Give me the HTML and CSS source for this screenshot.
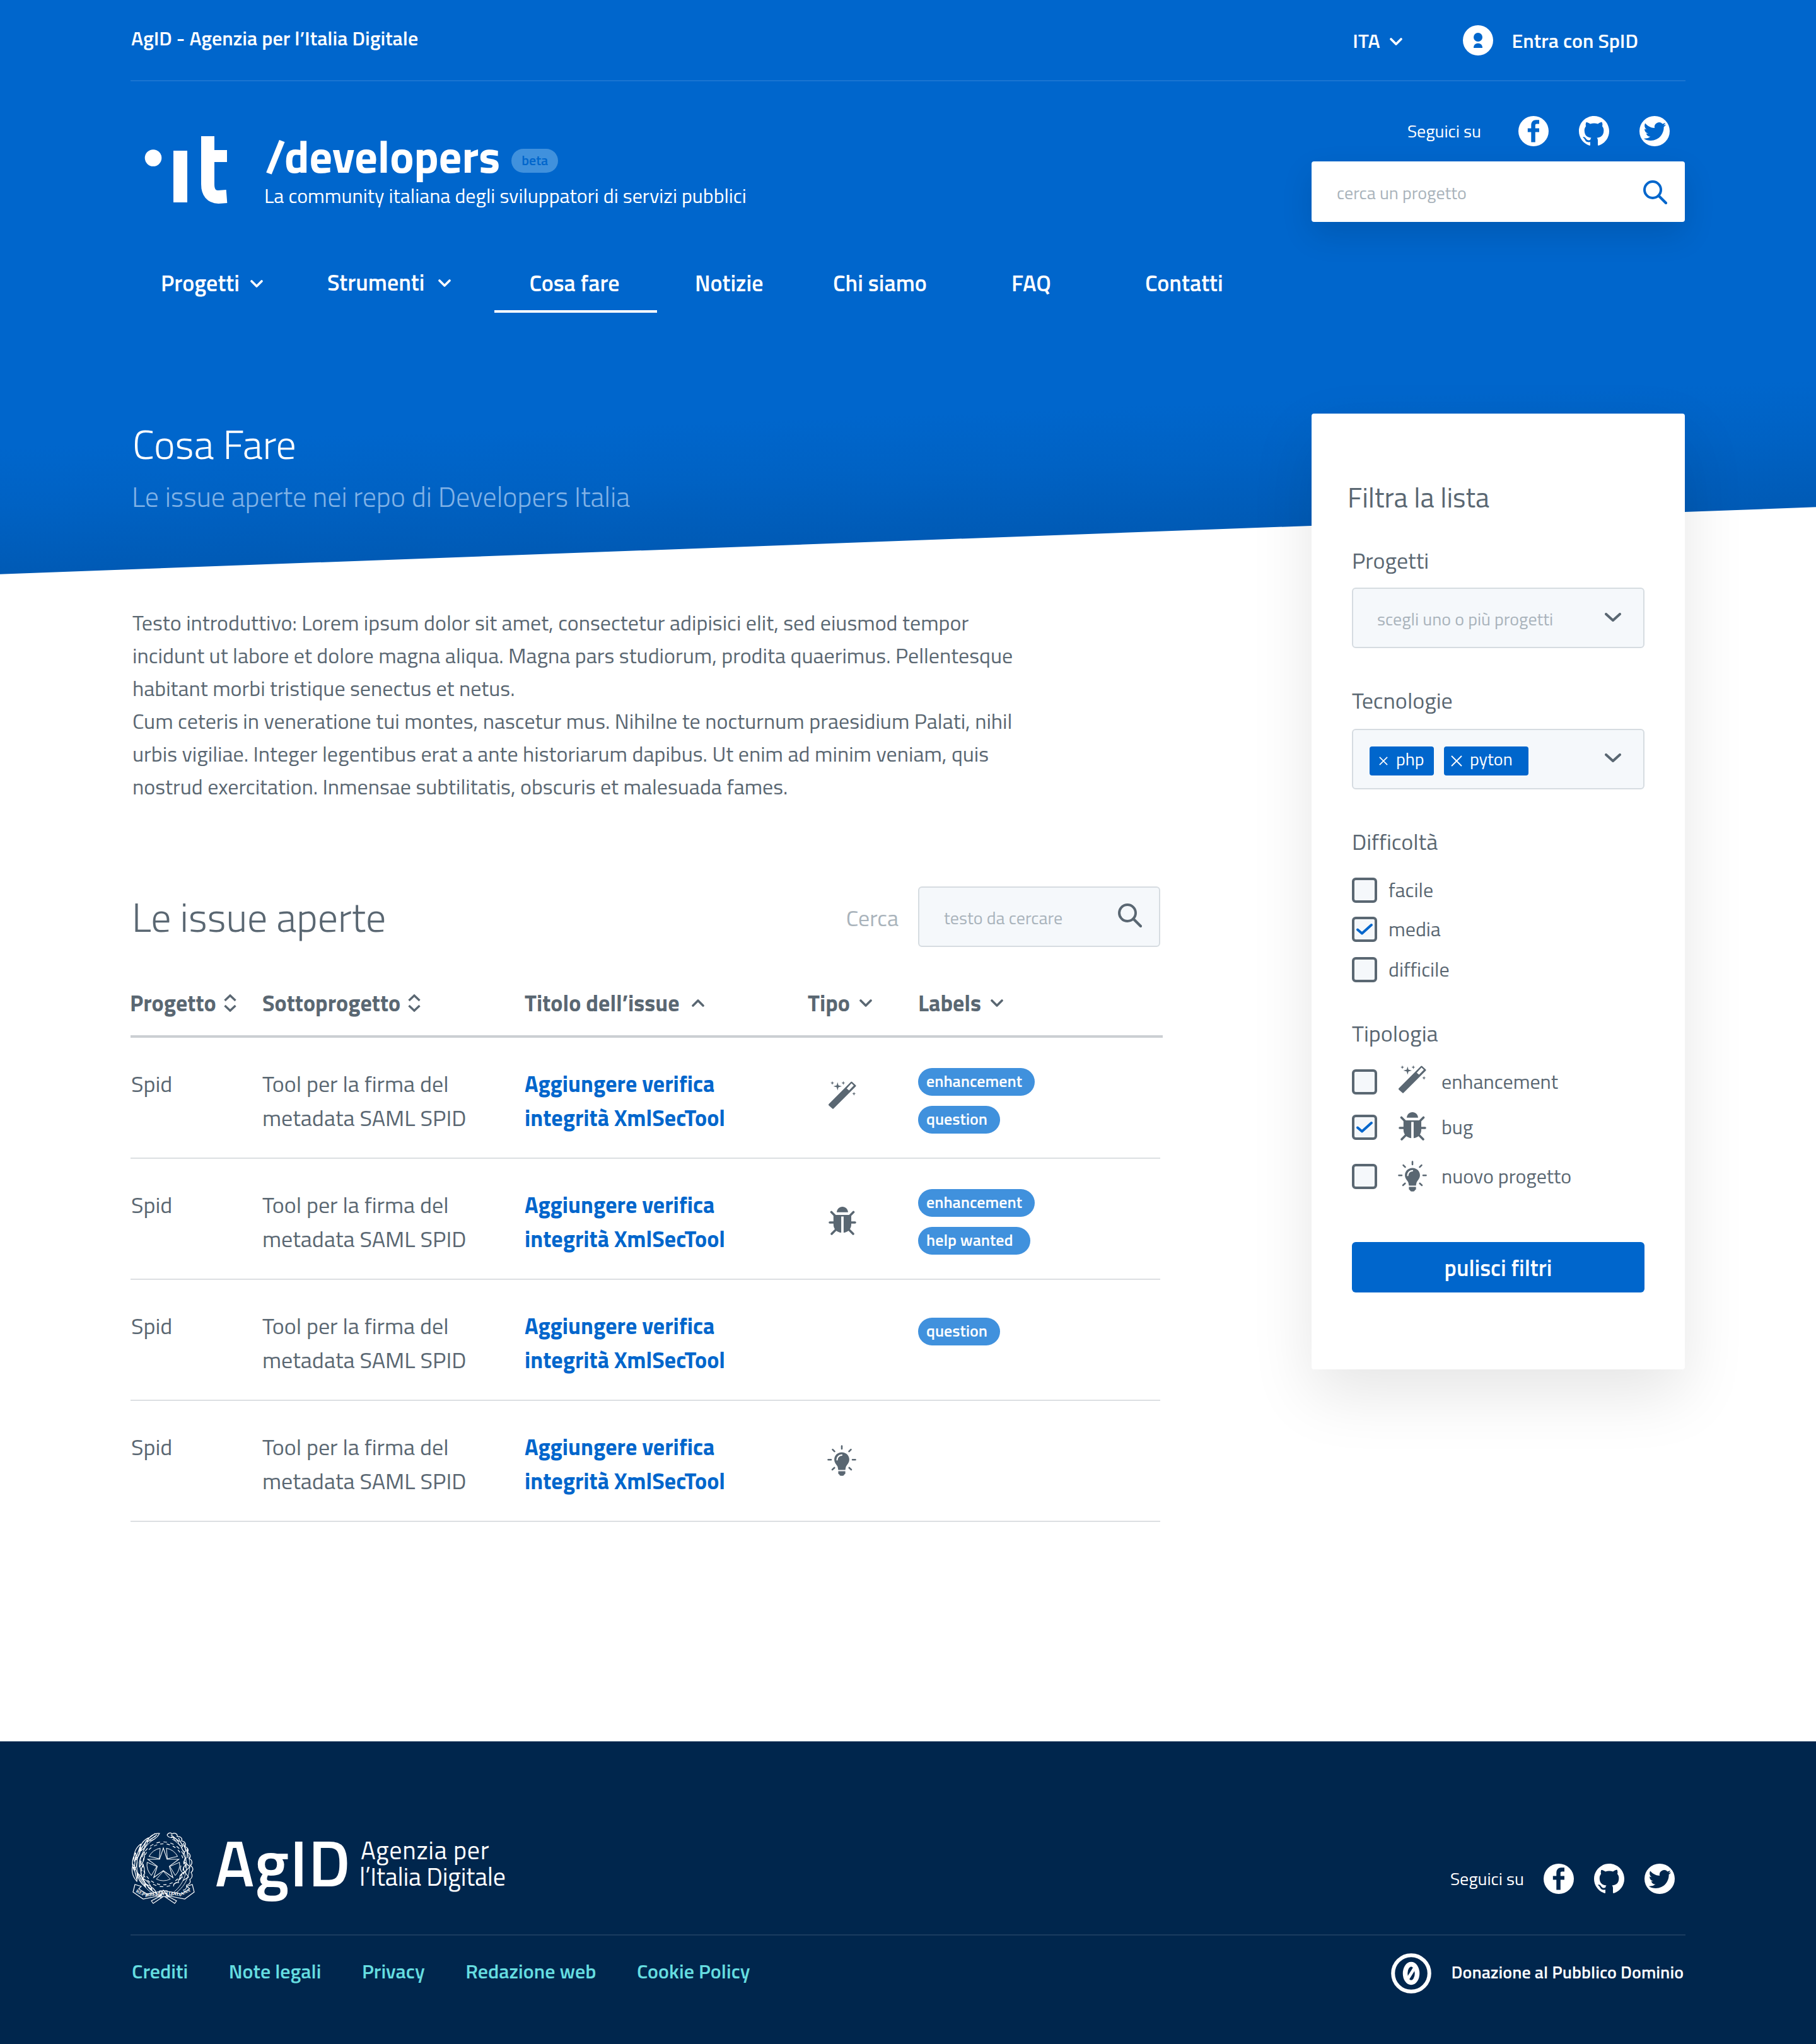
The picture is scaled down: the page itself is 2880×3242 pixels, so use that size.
FILE: index.html
```
<!DOCTYPE html>
<html lang="it">
<head>
<meta charset="utf-8">
<title>Developers Italia - Cosa fare</title>
<link rel="stylesheet" href="styles.css">
</head>
<body>
<svg class="sprite" aria-hidden="true">
  <symbol id="chevron" viewBox="0 0 20 12"><path d="M2 2l8 8 8-8" fill="none" stroke="currentColor" stroke-width="3.6" stroke-linecap="round" stroke-linejoin="round"/></symbol>
  <symbol id="chevron-lg" viewBox="0 0 26 14"><path d="M2 2l11 10L24 2" fill="none" stroke="currentColor" stroke-width="4" stroke-linecap="round" stroke-linejoin="round"/></symbol>
  <symbol id="sort" viewBox="0 0 20 28"><path d="M1.500 10L10 2l8.500 8M1.500 18l8.500 8 8.500-8" fill="none" stroke="currentColor" stroke-width="3.400"/></symbol>
  <symbol id="search" viewBox="0 0 38 38"><circle cx="15" cy="15" r="13" fill="none" stroke="currentColor" stroke-width="4"/><path d="M24.500 24.500L36 36" stroke="currentColor" stroke-width="4.200" stroke-linecap="round"/></symbol>
  <symbol id="facebook" viewBox="0 0 48 48"><circle cx="24" cy="24" r="24" fill="#fff"/><path fill="currentColor" d="M33 6.200v6.300h-3.600c-2 0-2.600.8-2.600 2.600v4.300H33v6h-6.200v16.100h-6.500V25.400h-5.500v-6h5.500v-5c0-5 3-8.200 7.600-8.200z"/></symbol>
  <symbol id="github" viewBox="0 0 16 16"><path fill="#fff" d="M8 0C3.580 0 0 3.580 0 8c0 3.540 2.290 6.530 5.470 7.590.4.070.550-.170.550-.380 0-.190-.010-.820-.010-1.490-2.010.370-2.530-.490-2.690-.940-.090-.230-.480-.940-.820-1.130-.280-.150-.680-.520-.010-.530.630-.010 1.080.580 1.230.820.720 1.210 1.870.870 2.330.660.070-.520.280-.870.510-1.070-1.780-.2-3.640-.890-3.640-3.950 0-.870.310-1.590.820-2.150-.080-.2-.360-1.020.080-2.120 0 0 .670-.210 2.200.820.640-.180 1.320-.270 2-.270s1.360.090 2 .270c1.530-1.040 2.200-.820 2.200-.820.440 1.100.160 1.920.080 2.120.510.560.820 1.270.820 2.150 0 3.070-1.870 3.750-3.650 3.950.290.250.540.730.540 1.480 0 1.070-.010 1.930-.010 2.200 0 .210.150.460.550.380A8.010 8.010 0 0 0 16 8c0-4.420-3.580-8-8-8z"/></symbol>
  <symbol id="twitter" viewBox="0 0 48 48"><circle cx="24" cy="24" r="24" fill="#fff"/><path fill="currentColor" transform="translate(6.700 6.800) scale(1.480)" d="M23.953 4.570a10 10 0 01-2.825.775 4.958 4.958 0 002.163-2.723c-.951.555-2.005.959-3.127 1.184a4.920 4.920 0 00-8.384 4.482C7.690 8.095 4.067 6.130 1.640 3.162a4.822 4.822 0 00-.666 2.475c0 1.710.870 3.213 2.188 4.096a4.904 4.904 0 01-2.228-.616v.06a4.923 4.923 0 003.946 4.827 4.996 4.996 0 01-2.212.085 4.936 4.936 0 004.604 3.417 9.867 9.867 0 01-6.102 2.105c-.390 0-.779-.023-1.170-.067a13.995 13.995 0 007.557 2.209c9.053 0 13.998-7.496 13.998-13.985 0-.210 0-.420-.015-.630A9.935 9.935 0 0024 4.590z"/></symbol>
  <symbol id="wand" viewBox="0 0 44 44"><path fill="currentColor" fill-rule="evenodd" d="M0 37.500v-1L35.400.900q1-1 2 0l5.700 5.300q1 1 0 2L8 43.200q-1 1-2 0L.500 38.500zM28.800 11.400l3.700 3.200 7.500-7.800-3.600-3.500z"/><path fill="currentColor" d="M14.300 1.500l1.400 4.900 5.300 1.600-5.300 1.600-1.400 4.900-1.400-4.900L7.600 8l5.300-1.600zM6-.3l.8 2.200 2.200.8-2.200.8L6 5.700l-.8-2.200L3 2.700l2.200-.8zM23.400-.3l.8 2.200 2.200.8-2.200.8-.8 2.200-.8-2.200-2.200-.8 2.200-.8zM40.300 16.800l.8 2.200 2.200.8-2.200.8-.8 2.200-.8-2.200-2.200-.8 2.200-.8z"/></symbol>
  <symbol id="bug" viewBox="0 0 44 45"><path fill="currentColor" d="M13 8.800C13.400 3.600 17 0 22 0s8.600 3.600 9 8.800zM7.800 13H36v15c0 7.500-5 12.400-12.100 13.200V15.600h-3.800v25.600C13 40.400 7.800 35.500 7.800 28z"/><path fill="none" stroke="currentColor" stroke-width="3.600" stroke-linecap="round" d="M4.500 8.500l5.500 5.500M2 25h7M5 43l6-6M39.500 8.500L34 14M42 25h-7M39 43l-6-6"/></symbol>
  <symbol id="bulb" viewBox="0 0 46 50"><path fill="currentColor" d="M23 11.400c6.800 0 11.900 5 11.900 11.300 0 4.800-2.500 7.300-4.600 10.300-1 1.500-1.300 4.500-1.700 6.500H17.400c-.4-2-.700-5-1.700-6.500-2.100-3-4.600-5.500-4.600-10.300 0-6.300 5.100-11.300 11.900-11.300zM17.400 41.500h11.200v3.500q0 1.200-1.500 1.500-.8 2.200-2.500 2.200h-3.200q-1.700 0-2.500-2.200-1.500-.3-1.500-1.500z"/><path fill="none" stroke="#fff" stroke-width="2.200" stroke-linecap="round" d="M15.500 23.500c0-4 3-7.500 7.500-7.700"/><path fill="none" stroke="currentColor" stroke-width="2.600" stroke-linecap="round" d="M23 1.500v4.500M1.500 23.200h4.500M40 23.200h4.500M8.500 7.200l3 3M37.500 7.200l-3 3M8 39l3.300-3M38 39l-3.300-3"/></symbol>
</svg>

<header class="hero">
  <div class="topbar">
    <span class="owner">AgID - Agenzia per l’Italia Digitale</span>
    <div class="topbar-tools">
      <span class="lang">ITA</span><svg class="chev lang-chev"><use href="#chevron"/></svg>
      <svg class="avatar" viewBox="0 0 48 48"><circle cx="24" cy="24" r="24" fill="#fff"/><circle cx="24" cy="19" r="7" fill="#06c"/><path d="M17 36c0-5 3-7.300 7-7.300s7 2.300 7 7.300z" fill="#06c"/></svg>
      <span class="login">Entra con SpID</span>
    </div>
  </div>

  <div class="masthead">
    <svg class="it-logo" viewBox="0 0 131 107"><circle cx="13" cy="34.500" r="13.300" fill="#fff"/><rect x="45" y="23" width="22" height="82" fill="#fff"/><rect x="90" y="22" width="40" height="19" fill="#fff"/><path d="M99.500 0v76q0 20 17 20.500l13-1" fill="none" stroke="#fff" stroke-width="21"/></svg>
    <div class="brand">
      <div class="brand-line"><span class="brand-name">/developers</span><span class="beta">beta</span></div>
      <div class="tagline">La community italiana degli sviluppatori di servizi pubblici</div>
    </div>
    <div class="masthead-side">
      <div class="social">
        <span class="follow">Seguici su</span>
        <svg><use href="#facebook"/></svg><svg><use href="#github"/></svg><svg><use href="#twitter"/></svg>
      </div>
      <div class="project-search"><span class="hint">cerca un progetto</span><svg><use href="#search"/></svg></div>
    </div>
  </div>

  <nav class="nav">
    <a>Progetti<svg class="chev"><use href="#chevron"/></svg></a>
    <a class="raised">Strumenti<svg class="chev"><use href="#chevron"/></svg></a>
    <a class="active">Cosa fare</a>
    <a>Notizie</a>
    <a>Chi siamo</a>
    <a>FAQ</a>
    <a>Contatti</a>
  </nav>

  <h1>Cosa Fare</h1>
  <p class="subtitle">Le issue aperte nei repo di Developers Italia</p>
</header>

<main class="main">
  <section class="content">
    <p class="intro">Testo introduttivo: Lorem ipsum dolor sit amet, consectetur adipisici elit, sed eiusmod tempor<br>incidunt ut labore et dolore magna aliqua. Magna pars studiorum, prodita quaerimus. Pellentesque<br>habitant morbi tristique senectus et netus.<br>Cum ceteris in veneratione tui montes, nascetur mus. Nihilne te nocturnum praesidium Palati, nihil<br>urbis vigiliae. Integer legentibus erat a ante historiarum dapibus. Ut enim ad minim veniam, quis<br>nostrud exercitation. Inmensae subtilitatis, obscuris et malesuada fames.</p>

    <div class="list-head">
      <h2>Le issue aperte</h2>
      <span class="search-label">Cerca</span>
      <div class="field list-search"><span class="hint">testo da cercare</span><svg><use href="#search"/></svg></div>
    </div>

    <div class="row thead">
      <div>Progetto<svg class="sort"><use href="#sort"/></svg></div>
      <div>Sottoprogetto<svg class="sort"><use href="#sort"/></svg></div>
      <div>Titolo dell’issue<svg class="chev up"><use href="#chevron"/></svg></div>
      <div>Tipo<svg class="chev"><use href="#chevron"/></svg></div>
      <div>Labels<svg class="chev"><use href="#chevron"/></svg></div>
    </div>

    <div class="row">
      <div>Spid</div>
      <div>Tool per la firma del<br>metadata SAML SPID</div>
      <div class="issue">Aggiungere verifica<br>integrità XmlSecTool</div>
      <div class="type"><svg class="i-wand"><use href="#wand"/></svg></div>
      <div class="labels"><span class="tag">enhancement</span><span class="tag">question</span></div>
    </div>
    <div class="row">
      <div>Spid</div>
      <div>Tool per la firma del<br>metadata SAML SPID</div>
      <div class="issue">Aggiungere verifica<br>integrità XmlSecTool</div>
      <div class="type"><svg class="i-bug"><use href="#bug"/></svg></div>
      <div class="labels"><span class="tag">enhancement</span><span class="tag wide">help wanted</span></div>
    </div>
    <div class="row">
      <div>Spid</div>
      <div>Tool per la firma del<br>metadata SAML SPID</div>
      <div class="issue">Aggiungere verifica<br>integrità XmlSecTool</div>
      <div class="type"></div>
      <div class="labels single"><span class="tag">question</span></div>
    </div>
    <div class="row">
      <div>Spid</div>
      <div>Tool per la firma del<br>metadata SAML SPID</div>
      <div class="issue">Aggiungere verifica<br>integrità XmlSecTool</div>
      <div class="type"><svg class="i-bulb"><use href="#bulb"/></svg></div>
      <div class="labels"></div>
    </div>
  </section>

  <aside class="panel">
    <h3>Filtra la lista</h3>
    <h4 class="first">Progetti</h4>
    <div class="field select"><span class="hint">scegli uno o più progetti</span><svg class="arrow"><use href="#chevron-lg"/></svg></div>
    <h4 class="second">Tecnologie</h4>
    <div class="field select tags">
      <span class="chip"><svg viewBox="0 0 16 16"><path d="M1 1l14 14M15 1L1 15" stroke="#fff" stroke-width="1.900"/></svg>php</span>
      <span class="chip long"><svg viewBox="0 0 16 16"><path d="M0 0l16 16M16 0L0 16" stroke="#fff" stroke-width="1.800"/></svg>pyton</span>
      <svg class="arrow"><use href="#chevron-lg"/></svg>
    </div>
    <h4 class="third">Difficoltà</h4>
    <div class="check c1"><i></i><span>facile</span></div>
    <div class="check c2"><i><svg viewBox="0 0 26 20"><path d="M2 10.500l7 6L24 3" fill="none" stroke="#06c" stroke-width="4" stroke-linecap="round" stroke-linejoin="round"/></svg></i><span>media</span></div>
    <div class="check c3"><i></i><span>difficile</span></div>
    <h4 class="fourth">Tipologia</h4>
    <div class="check c1"><i></i><b><svg class="i-wand"><use href="#wand"/></svg></b><span>enhancement</span></div>
    <div class="check c4"><i><svg viewBox="0 0 26 20"><path d="M2 10.500l7 6L24 3" fill="none" stroke="#06c" stroke-width="4" stroke-linecap="round" stroke-linejoin="round"/></svg></i><b><svg class="i-bug"><use href="#bug"/></svg></b><span>bug</span></div>
    <div class="check c5"><i></i><b><svg class="i-bulb"><use href="#bulb"/></svg></b><span>nuovo progetto</span></div>
    <button class="clear">pulisci filtri</button>
  </aside>
</main>

<footer class="footer">
  <div class="footer-top">
    <svg class="emblem" viewBox="0 0 102 113" fill="none" stroke="#fff" stroke-width=".9">
      <g transform="translate(50 50)">
        <circle r="35.500" stroke-width="1.200" stroke-dasharray="5.600 5.550"/>
        <circle r="32.500" stroke-width="1.200" stroke-dasharray="5.100 5.110" stroke-dashoffset="5.100"/>
        <path d="M0-26L5.900-8.100 24.700-8 9.500 3.100 15.300 21 0 10-15.300 21-9.500 3.100-24.700-8-5.900-8.100z" stroke-width="1.100"/>
        <path d="M0-11L-11-23.500A26 26 0 0 1 11-23.500Z" transform="rotate(180)"/><path d="M0-11L-11-23.500A26 26 0 0 1 11-23.500Z" transform="rotate(36)"/><path d="M0-11L-11-23.500A26 26 0 0 1 11-23.500Z" transform="rotate(108)"/><path d="M0-11L-11-23.500A26 26 0 0 1 11-23.500Z" transform="rotate(252)"/><path d="M0-11L-11-23.500A26 26 0 0 1 11-23.500Z" transform="rotate(324)"/>
      </g>
      <path d="M47 103C22 94 8 74 8 50 9 28 20 12 38 6M44 100C26 90 13 72 13 50 14 32 22 18 36 10"/>
      <path stroke-width="1.200" d="M44 1C36 0 28 5 24 14c8-1 16-5 20-13zM40 3l-12 9M37 1l-12 9M26 8c-8 4-13 12-14 22 8-4 14-12 14-22zM24 11L14 28M14 18C6 24 2 34 4 45c7-6 11-16 10-27zM13 22L6 42M6 32c-5 8-7 18-2 28 5-8 6-18 2-28zM6 36L4 57M2 50c-3 9-1 19 6 27 2-9 0-19-6-27zM3 54l5 20M20 30c-6 6-9 14-8 24 7-6 9-14 8-24zM22 14l-3 14M18 50c-4 8-5 16-1 24 4-7 4-16 1-24zM9 64c0 9 5 16 13 22-1-9-5-17-13-22zM11 67l10 17M17 72c2 7 7 13 15 18-2-8-7-14-15-18zM24 82c2 6 8 11 15 14-2-6-8-11-15-14z"/>
      <path d="M55 103C80 94 92 74 92 50 91 28 80 12 62 6M58 100C76 90 87 72 87 50 86 32 78 18 64 10"/>
      <path stroke-width="1.200" d="M56 4c1-4 6-5 8-2 4-3 9 0 8 4 5-1 9 3 7 7 5 0 8 5 5 9 5 1 7 6 4 9 5 2 6 7 3 10 5 2 6 7 2 11 5 3 5 8 1 11 3 4 2 9-2 11 2 4 0 8-5 9 1 4-2 8-6 8M56 4c3 4 7 4 10 3 0 4 4 7 8 6-1 4 2 8 6 8-2 4 1 8 4 9-3 3-2 8 2 10-4 3-4 8 0 11-5 2-5 7-2 11-5 1-6 5-4 9-5 0-7 4-6 8-4-1-8 2-8 6M62 3l12 10M74 8l7 14M82 16l4 14M88 24l0 16M78 52c-2 6 0 10 4 12-5 1-7 6-5 10M84 46l8 8-8 8 6 8-9 6"/>
      <path d="M5 82l-3 12 16 11 26-5 7-5 7 5 26 5 15-11-3-12-9 3 5 4-13 8-22-4-6-1-6 1-21 4-13-8 4-4zM44 100l6-9 8 9M48 99l-17 9 3 4 16-11M54 99l17 9-3 4-16-11M44 92h12v9H44z" stroke-width="1.200"/>
      <text x="6" y="94" transform="rotate(26 6 94)" class="motto">REPV</text><text x="23" y="101" transform="rotate(-5 23 101)" class="motto">BBLICA</text><text x="58" y="98" transform="rotate(6 58 98)" class="motto">ITAL</text><text x="76" y="101" transform="rotate(-26 76 101)" class="motto">IANA</text>
    </svg>
    <span class="agid">AgID</span>
    <div class="agid-name"><span class="agid-first">Agenzia per</span><br><span class="agid-second">l’Italia Digitale</span></div>
    <div class="social">
      <span class="follow">Seguici su</span>
      <svg><use href="#facebook"/></svg><svg><use href="#github"/></svg><svg><use href="#twitter"/></svg>
    </div>
  </div>
  <div class="footer-bottom">
    <a>Crediti</a><a>Note legali</a><a>Privacy</a><a>Redazione web</a><a>Cookie Policy</a>
    <svg class="cc0" viewBox="0 0 64 64" fill="none" stroke="#fff"><circle cx="32" cy="32" r="28.800" stroke-width="6"/><ellipse cx="32" cy="32" rx="9.500" ry="14.500" stroke-width="7.500"/><path d="M27 40l10-16" stroke-width="5"/></svg>
    <span class="license">Donazione al Pubblico Dominio</span>
  </div>
</footer>
</body>
</html>
```
FILE: styles.css
```
* { box-sizing: border-box; }
body {
  margin: 0;
  width: 2880px;
  background: #fff;
  color: #5a6772;
  font-family: "Titillium Web", Roboto, "Open Sans", sans-serif;
  font-weight: 400;
}
h1, h2, h3, h4, p { margin: 0; font-weight: 300; }
svg { display: block; flex: none; overflow: visible; }
.sprite { position: absolute; width: 0; height: 0; }
.chev { width: 20px; height: 12px; }
.sort { width: 20px; height: 28px; margin-left: 12px; }
.hint { font-size: 28px; line-height: 40px; color: #a9b3bb; font-weight: 400; }
.i-wand { width: 44px; height: 44px; }
.i-bug { width: 44px; height: 45px; }
.i-bulb { width: 46px; height: 50px; }

/* Header */
.hero {
  height: 911px;
  padding: 0 207px;
  color: #fff;
  background: linear-gradient(177.880deg, #06c 0, #06c 710px, #0062c4 800px, #005ab5 911px);
  clip-path: polygon(0 0, 100% 0, 100% 804.300px, 0 910.700px);
}
.topbar {
  display: flex;
  justify-content: space-between;
  height: 129px;
  border-bottom: 2px solid rgba(255, 255, 255, .1);
  font-size: 32px;
  line-height: 40px;
  font-weight: 600;
}
.owner { padding: 40px 0 0 1px; }
.topbar-tools { display: flex; padding: 40px 75px 0 0; }
.lang { padding-top: 4px; }
.lang-chev { margin: 20px 96px 0 15px; }
.avatar { width: 48px; height: 48px; }
.login { padding: 4px 0 0 30px; }
.masthead { display: flex; height: 275px; }
.it-logo { width: 131px; height: 107px; margin: 87px 59px 0 23px; }
.brand { flex: 1; padding-top: 78px; }
.brand-line { display: flex; height: 83px; }
.brand-name { font-size: 72px; line-height: 80px; font-weight: 700; }
.beta {
  height: 38px;
  width: 74px;
  margin: 29px 0 0 18px;
  border-radius: 19px;
  background: #4091dd;
  color: #06c;
  font-size: 22px;
  line-height: 36px;
  font-weight: 600;
  text-align: center;
}
.tagline { margin-left: -1px; font-size: 32px; line-height: 40px; font-weight: 400; }
.masthead-side { width: 594px; padding-top: 55px; }
.social { display: flex; align-items: center; color: #06c; }
.social svg { width: 48px; height: 48px; margin-left: 48px; }
.follow { color: #fff; font-size: 28px; line-height: 32px; font-weight: 400; }
.masthead-side .social { justify-content: flex-end; padding-right: 25px; }
.masthead-side .follow { margin-right: 11px; }
.project-search {
  display: flex;
  align-items: center;
  justify-content: space-between;
  width: 592px;
  height: 96px;
  margin: 24px 0 0 1px;
  padding: 4px 28px 0 40px;
  border-radius: 4px;
  background: #fff;
  color: #06c;
  box-shadow: 0 20px 50px rgba(0, 0, 0, .12);
}
.project-search svg, .list-search svg { width: 38px; height: 38px; }
.project-search svg { margin-bottom: 2px; }
.nav {
  display: grid;
  grid-template-columns: 264px 265px 318px 219px 283px 212px auto;
  height: 92px;
  padding-left: 48px;
  font-size: 36px;
  line-height: 40px;
  font-weight: 600;
}
.nav a { display: flex; align-items: center; padding-bottom: 2px; }
.nav .chev { margin: 2px 0 0 17px; }
.nav .raised { padding-bottom: 4px; }
.nav .raised .chev { margin-left: 22px; }
.nav .active { width: 258px; justify-content: center; padding-right: 4px; box-shadow: inset 0 -4px #fff; }
h1 { margin: 172px 0 0 3px; font-size: 64px; line-height: 72px; }
.subtitle { margin: 20px 0 0 2px; font-size: 44px; line-height: 56px; color: #80b2e6; }

/* Page body */
.main { position: relative; display: flex; height: 1851px; padding-left: 207px; }
.content { width: 1633px; padding-top: 50px; }
.intro { margin-left: 3px; font-size: 34px; line-height: 52px; font-weight: 400; white-space: nowrap; }
.list-head { display: flex; align-items: center; height: 96px; margin-top: 133px; }
h2 { padding-left: 2px; font-size: 64px; line-height: 72px; }
.search-label { margin: 2px 31px 0 auto; font-size: 36px; color: #a9b3bb; font-weight: 400; }
.field {
  display: flex;
  align-items: center;
  height: 96px;
  border: 2px solid #d6dce1;
  border-radius: 6px;
  background: #f5f8fb;
}
.list-search { width: 384px; justify-content: space-between; padding: 0 27px 4px 39px; }
.list-search .hint { padding-top: 8px; }
.row {
  display: grid;
  grid-template-columns: 209px 416px 449px 175px 1fr;
  height: 192px;
  padding-top: 46px;
  border-bottom: 2px solid #dcdfe2;
  font-size: 36px;
  line-height: 54px;
  font-weight: 400;
}
.row > :first-child { padding-left: 1px; }
.thead {
  width: 1637px;
  height: 144px;
  padding-top: 69px;
  border-bottom: 4px solid #cbcfd3;
  line-height: 40px;
  font-weight: 700;
}
.thead > :first-child { padding-left: 0; margin-left: -1px; }
.thead div { display: flex; align-items: center; height: 40px; }
.thead .chev { margin-left: 15px; }
.thead .up { margin-left: 19px; }
.up { transform: rotate(180deg); }
.issue { color: #06c; font-weight: 700; }
.type { padding-left: 33px; }
.type .i-wand { margin-top: 23px; }
.type .i-bug { margin-top: 30px; }
.type .i-bulb { margin: 24px 0 0 -2px; }
.labels { display: flex; flex-direction: column; align-items: flex-start; gap: 16px; padding-top: 2px; }
.single { padding-top: 14px; }
.tag {
  height: 44px;
  padding: 0 20px 0 13px;
  border-radius: 22px;
  background: #4091dd;
  color: #fff;
  font-size: 26px;
  line-height: 42px;
  font-weight: 600;
}
.wide { padding-right: 27px; }

/* Filter panel */
.panel {
  width: 592px;
  height: 1516px;
  margin: -255px 0 0 240px;
  padding: 105px 64px 0;
  border-radius: 4px;
  background: #fff;
  box-shadow: 0 40px 100px rgba(0, 0, 0, .1);
}
h3 { margin-left: -7px; font-size: 44px; line-height: 56px; font-weight: 400; }
h4 { font-size: 36px; line-height: 40px; font-weight: 400; }
.first { margin: 52px 0 23px; }
.second { margin: 63px 0 25px; }
.third { margin-top: 63px; }
.fourth { margin-top: 61px; }
.select { padding: 0 35px 0 38px; }
.select .hint { padding-top: 4px; }
.arrow { width: 26px; height: 14px; margin: 0 0 2px auto; }
.tags { padding-left: 26px; }
.tags .arrow { margin-bottom: 4px; }
.chip {
  display: flex;
  align-items: center;
  gap: 13px;
  width: 102px;
  height: 46px;
  margin: 6px 16px 0 0;
  padding: 0 0 7px 15px;
  border-radius: 4px;
  background: #06c;
  color: #fff;
  font-size: 28px;
  line-height: 40px;
}
.chip svg { width: 14px; height: 16px; margin-top: 7px; }
.long { width: 134px; padding-left: 12px; }
.long svg { width: 16px; }
.check { display: flex; align-items: center; height: 40px; font-size: 32px; line-height: 40px; font-weight: 400; }
.check i { display: flex; align-items: center; justify-content: center; width: 40px; height: 40px; border: 4px solid #5a6772; border-radius: 6px; background: #f5f8fb; }
.check i svg { width: 26px; height: 20px; }
.check span { margin: -3px 0 0 18px; }
.check b { display: flex; align-items: center; justify-content: center; width: 48px; margin-left: 32px; }
.check b + span { margin-left: 22px; }
.check .i-wand { margin-bottom: 8px; }
.check .i-bug { margin-bottom: 4px; }
.c1 { margin-top: 37px; }
.c2 { margin-top: 22px; }
.c3 { margin-top: 24px; }
.c4 { margin-top: 32px; }
.c5 { margin-top: 38px; }
.clear {
  display: block;
  width: 464px;
  height: 80px;
  margin-top: 84px;
  padding: 2px 0 0;
  border: 0;
  border-radius: 6px;
  background: #06c;
  color: #fff;
  font: 600 36px/40px "Titillium Web", Roboto, "Open Sans", sans-serif;
}

/* Footer */
.footer { height: 480px; padding: 140px 207px 0; background: #00264d; color: #fff; }
.footer-top { display: flex; align-items: flex-start; height: 168px; border-bottom: 2px solid rgba(255, 255, 255, .1); }
.emblem { width: 102px; height: 113px; margin: 5px 30px 0 2px; }
.motto { font: 700 7.500px "Liberation Serif", serif; fill: #fff; stroke: none; }
.agid { margin-top: -1px; font-size: 104px; line-height: 104px; font-weight: 600; letter-spacing: 1.300px; }
.agid-name { margin: 12px auto 0 15px; font-size: 40px; line-height: 42px; font-weight: 400; }
.agid-first { letter-spacing: .7px; }
.agid-second { margin-left: -2px; letter-spacing: -.25px; }
.footer .social { padding: 54px 17px 0 0; color: #00264d; }
.footer .social svg { margin-left: 32px; }
.footer .follow { margin-right: -1px; }
.footer-bottom { display: flex; align-items: center; height: 120px; padding-left: 2px; font-size: 32px; line-height: 40px; font-weight: 600; color: #65dde0; }
.footer-bottom a { margin: 0 64.500px 8px 0; }
.cc0 { width: 64px; height: 64px; margin-left: auto; }
.license { margin: 0 3px 4px 32px; font-size: 28px; color: #fff; }
```
